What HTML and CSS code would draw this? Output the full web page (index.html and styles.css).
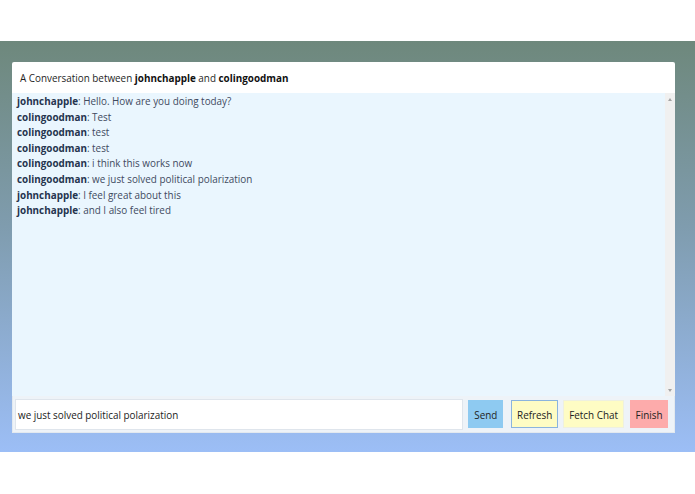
FILE: index.html
```html
<!DOCTYPE html>
<html>
<head>
<meta charset="utf-8">
<link rel="stylesheet" href="styles.css">
</head>
<body>
<div class="top"></div>
<div class="band">
  <div class="card">
    <div class="header">A Conversation between <b>johnchapple</b> and <b>colingoodman</b></div>
    <div class="chat">
      <div class="messages">
        <div class="msg"><b>johnchapple</b>: Hello. How are you doing today?</div>
        <div class="msg"><b>colingoodman</b>: Test</div>
        <div class="msg"><b>colingoodman</b>: test</div>
        <div class="msg"><b>colingoodman</b>: test</div>
        <div class="msg"><b>colingoodman</b>: i think this works now</div>
        <div class="msg"><b>colingoodman</b>: we just solved political polarization</div>
        <div class="msg"><b>johnchapple</b>: I feel great about this</div>
        <div class="msg"><b>johnchapple</b>: and I also feel tired</div>
      </div>
      <div class="scrollbar">
        <span class="arrow up"></span>
        <span class="arrow down"></span>
      </div>
    </div>
    <div class="footer">
      <div class="input">we just solved political polarization</div>
      <button class="btn send">Send</button>
      <button class="btn refresh">Refresh</button>
      <button class="btn fetch">Fetch Chat</button>
      <button class="btn finish">Finish</button>
    </div>
  </div>
</div>
</body>
</html>
```

FILE: styles.css
```css
html, body {
  margin: 0;
  padding: 0;
  background: #ffffff;
  font-family: "Open Sans", "Noto Sans", sans-serif;
}
.top {
  height: 41px;
}
.band {
  height: 411px;
  box-sizing: border-box;
  padding: 21px 20px 0 12px;
  background: linear-gradient(to bottom, #6e887c 0%, #7f9cae 45%, #9cbef6 100%);
}
.card {
  height: 371px;
  display: flex;
  flex-direction: column;
  background: #ffffff;
  border-radius: 2px;
}
.header {
  height: 31px;
  box-sizing: border-box;
  padding: 9px 0 0 8px;
  font-size: 9.9px;
  color: #1e1e1e;
}
.header b {
  font-weight: 700;
  color: #111;
}
.chat {
  height: 303px;
  display: flex;
  background: #eaf6fe;
}
.messages {
  flex: 1;
  padding: 1px 0 0 5px;
  font-size: 9.9px;
  line-height: 15.6px;
  color: #3f4a5e;
}
.msg b {
  color: #25344e;
  font-weight: 700;
}
.scrollbar {
  width: 10px;
  background: #f0f0f0;
  display: flex;
  flex-direction: column;
  justify-content: space-between;
  align-items: center;
  padding: 5px 0 4px;
}
.arrow {
  width: 0;
  height: 0;
  border-left: 2.5px solid transparent;
  border-right: 2.5px solid transparent;
}
.arrow.up {
  border-bottom: 3px solid #a3a3a3;
}
.arrow.down {
  border-top: 3px solid #a3a3a3;
}
.footer {
  flex: 1;
  display: flex;
  align-items: flex-start;
  padding: 3px 6px 0 2px;
  background: #eef3f8;
  border: 1px solid #e3e9ef;
  border-top: none;
}
.input {
  width: 449px;
  height: 31px;
  box-sizing: border-box;
  background: #ffffff;
  border: 1px solid #dfe5ec;
  padding: 1px 0 0 2px;
  font-size: 9.9px;
  line-height: 29px;
  color: #222;
  margin-right: 5px;
}
.btn {
  height: 28px;
  box-sizing: border-box;
  border: 1px solid transparent;
  font-family: "Open Sans", "Noto Sans", sans-serif;
  font-size: 9.9px;
  color: #222;
  padding: 1px 0 0;
  margin: 1px 0 0;
}
.send {
  width: 35px;
  background: #8ecaf1;
  border-color: #8ecaf1;
  margin-right: 8px;
}
.refresh {
  width: 47px;
  background: #fefcc4;
  border-color: #8bb4de;
  margin-right: 5px;
}
.fetch {
  width: 61px;
  background: #fefcc4;
  border-color: #eef0e0;
  margin-right: 6px;
}
.finish {
  width: 38px;
  background: #fdabab;
  border-color: #fdabab;
}
```
